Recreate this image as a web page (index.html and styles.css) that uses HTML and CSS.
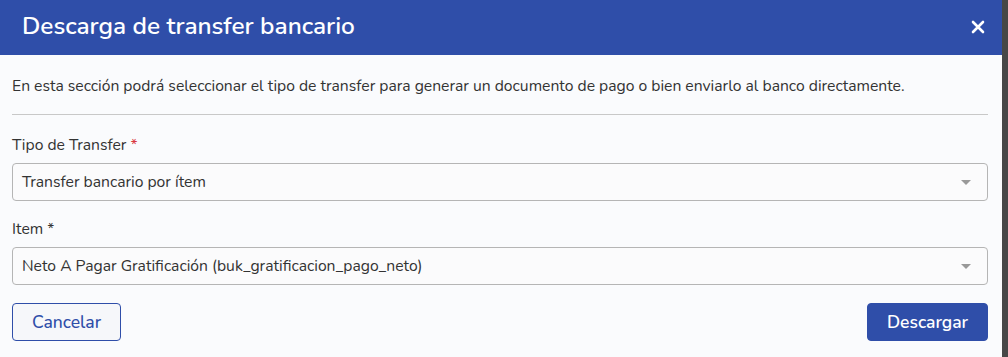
FILE: index.html
```html
<!DOCTYPE html>
<html lang="es">
<head>
<meta charset="utf-8">
<link rel="stylesheet" href="styles.css">
</head>
<body>
<div class="page">
  <div class="modal">
    <div class="modal-header">
      <h1 class="title">Descarga de transfer bancario</h1>
      <button class="close" aria-label="Cerrar">
        <svg width="14" height="14" viewBox="0 0 14 14"><path d="M2 2L12 12M12 2L2 12" stroke="#fff" stroke-width="2.6" stroke-linecap="round"/></svg>
      </button>
    </div>
    <div class="modal-body">
      <p class="desc">En esta sección podrá seleccionar el tipo de transfer para generar un documento de pago o bien enviarlo al banco directamente.</p>
      <hr class="divider">
      <div class="field">
        <label class="label">Tipo de Transfer <span class="req">*</span></label>
        <div class="select"><span>Transfer bancario por ítem</span><span class="caret"></span></div>
      </div>
      <div class="field">
        <label class="label">Item *</label>
        <div class="select"><span>Neto A Pagar Gratificación (buk_gratificacion_pago_neto)</span><span class="caret"></span></div>
      </div>
      <div class="actions">
        <button class="btn btn-outline">Cancelar</button>
        <button class="btn btn-primary">Descargar</button>
      </div>
    </div>
  </div>
  <div class="scrollbar"></div>
</div>
</body>
</html>
```
FILE: styles.css
```css
* { box-sizing: border-box; }
html, body { margin: 0; padding: 0; }
body {
  width: 1008px;
  height: 357px;
  overflow: hidden;
  font-family: "Nunito", Lato, "Open Sans", sans-serif;
  background: #fafbfd;
}
.page {
  display: flex;
  height: 357px;
}
.modal {
  width: 1002px;
  height: 357px;
  background: #fafbfd;
  display: flex;
  flex-direction: column;
}
.scrollbar {
  width: 6px;
  background: #474747;
}
.modal-header {
  height: 55px;
  background: #2f4ea9;
  display: flex;
  align-items: center;
  justify-content: space-between;
  padding: 0 17px 4px 22px;
}
.title {
  margin: 0;
  color: #fff;
  font-size: 24.4px;
  font-weight: 600;
}
.close {
  background: none;
  border: 0;
  padding: 0;
  width: 14px;
  height: 14px;
  display: flex;
  margin-top: 2px;
}
.modal-body {
  padding: 21px 14px 0 12px;
  display: flex;
  flex-direction: column;
}
.desc {
  margin: 0;
  font-size: 15.7px;
  color: #333;
  line-height: 20px;
}
.divider {
  border: 0;
  border-top: 1px solid #c8c8c8;
  margin: 18px 0 20px 0;
}
.field {
  display: flex;
  flex-direction: column;
  margin-bottom: 18px;
}
.label {
  font-size: 15.7px;
  color: #333;
  line-height: 20px;
  margin-bottom: 8px;
}
.req { color: #d9363e; }
.select {
  height: 38px;
  border: 1px solid #b5b5b5;
  border-radius: 4px;
  background: #fbfbfc;
  display: flex;
  align-items: center;
  justify-content: space-between;
  padding: 0 16px 0 9px;
  font-size: 15.7px;
  color: #333;
}
.caret {
  width: 0;
  height: 0;
  border-left: 5px solid transparent;
  border-right: 5px solid transparent;
  border-top: 5px solid #999;
}
.actions {
  display: flex;
  justify-content: space-between;
}
.btn {
  height: 38px;
  border-radius: 4px;
  font-family: inherit;
  font-size: 17.5px;
  font-weight: 600;
  padding: 0 10px;
}
.btn-outline {
  width: 109px;
  background: #f6f7fa;
  border: 1px solid #2f4ea9;
  color: #2f4ea9;
  font-weight: 500;
}
.btn-primary {
  width: 121px;
  background: #2f4ea9;
  border: 1px solid #2f4ea9;
  color: #fff;
}
```
